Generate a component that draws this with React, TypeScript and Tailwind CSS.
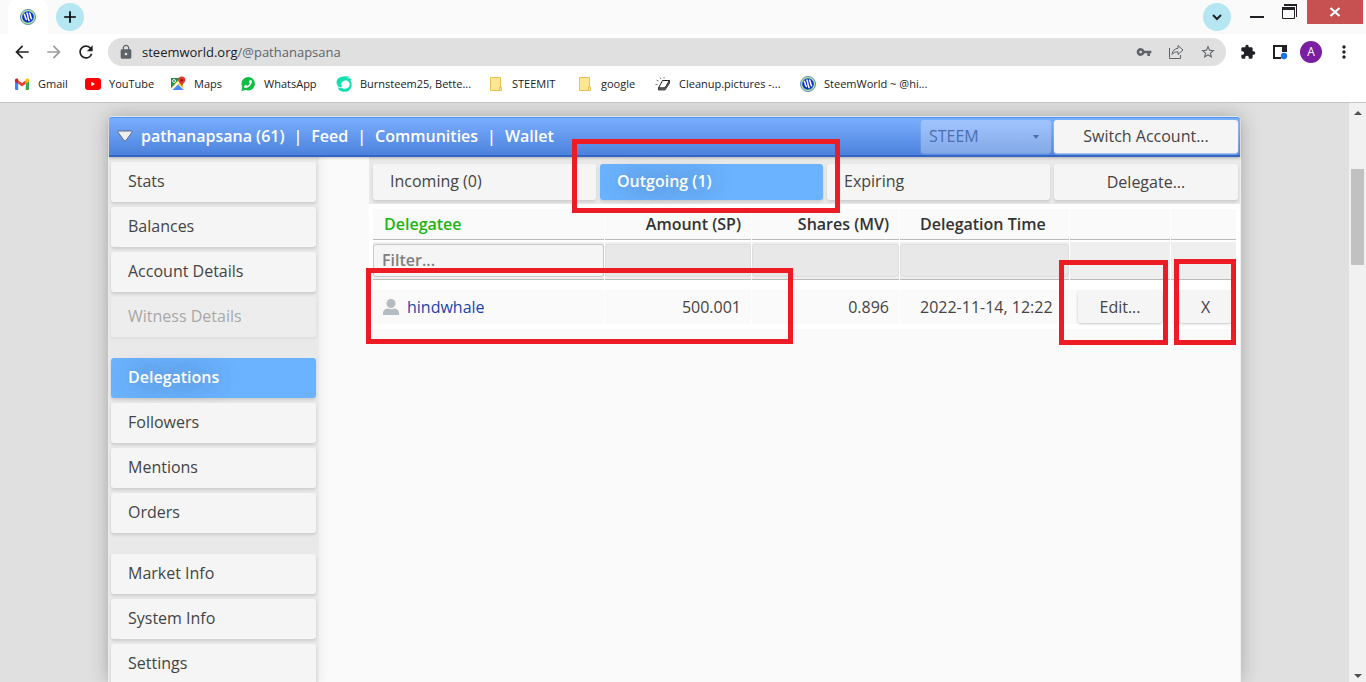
import type { ReactNode } from "react";
import { FaPhoneAlt, FaPlay } from "react-icons/fa";
import {
  MdAdd,
  MdArrowBack,
  MdArrowForward,
  MdExtension,
  MdLock,
  MdMoreVert,
  MdRefresh,
  MdStarBorder,
  MdVpnKey,
} from "react-icons/md";

const menuGroups = [
  [
    { label: "Stats" },
    { label: "Balances" },
    { label: "Account Details" },
    { label: "Witness Details", disabled: true },
  ],
  [
    { label: "Delegations", active: true },
    { label: "Followers" },
    { label: "Mentions" },
    { label: "Orders" },
  ],
  [{ label: "Market Info" }, { label: "System Info" }, { label: "Settings" }],
];

const accountLinks = ["pathanapsana (61)", "Feed", "Communities", "Wallet"];

function SteemWorldIcon() {
  return (
    <svg viewBox="0 0 16 16" className="size-4">
      <circle cx="8" cy="8" r="7.6" fill="#a8e89a" stroke="#5577b8" strokeWidth="0.8" />
      <circle cx="8" cy="8" r="5.8" fill="#1233c4" />
      <path
        d="M4.3 5.4c1.200 1 .2 2.600 2 5M6.900 4c1.400 2 .3 4 2.200 7.600M9.600 4.200c1.300 1.700.4 3.200 2 5.600"
        fill="none"
        stroke="#fff"
        strokeWidth="1.5"
        strokeLinecap="round"
      />
    </svg>
  );
}

function GmailIcon() {
  return (
    <svg viewBox="0 0 16 16" className="size-4">
      <path d="M1 4.2 4.2 6.6V14H2a1 1 0 0 1-1-1z" fill="#4285f4" />
      <path d="M15 4.2 11.8 6.6V14H14a1 1 0 0 0 1-1z" fill="#34a853" />
      <path d="M4.2 4.2 8 7l3.8-2.8v3.6L8 10.6 4.2 7.8z" fill="#ea4335" />
      <path d="M1 5.4V4c0-1.6 1.7-2 2.7-1.2l.5.4v4.6z" fill="#c5221f" />
      <path d="M15 5.4V4c0-1.6-1.7-2-2.7-1.2l-.5.4v4.6z" fill="#fbbc04" />
    </svg>
  );
}

function YouTubeIcon() {
  return (
    <span className="flex h-3 w-4 items-center justify-center rounded-[3px] bg-[#f00] text-white">
      <FaPlay className="size-1" />
    </span>
  );
}

function MapsIcon() {
  return (
    <svg viewBox="0 0 16 16" className="size-4">
      <path d="M1 2h12v12H1z" fill="#fbc816" />
      <path d="M1 2h9L1 12z" fill="#1e8e4e" />
      <path d="M1 14 7.5 8 14 14z" fill="#4a8af4" />
      <path d="m1 13 8-8.5 1.5 1.2L2.5 14H1z" fill="#fff" />
      <path d="m10 9 3.500 3.500V14L8.500 9z" fill="#dfe3e6" />
      <circle cx="4" cy="5" r="1.5" fill="none" stroke="#fff" strokeWidth="0.9" />
      <path d="M11.8.6a3.500 3.500 0 0 0-3.500 3.600c0 2.500 2.800 3 3.500 6.400.7-3.400 3.500-3.900 3.500-6.400A3.500 3.500 0 0 0 11.8.6z" fill="#e2392c" />
      <circle cx="11.8" cy="4.2" r="1.2" fill="#7c1712" />
    </svg>
  );
}

function WhatsAppIcon() {
  return (
    <span className="relative flex size-4 items-center justify-center">
      <svg viewBox="0 0 16 16" className="absolute inset-0 size-4">
        <circle cx="8.200" cy="7.800" r="6.800" fill="#12bd45" />
        <path d="m1.200 15 1.500-5.500 4 4.200z" fill="#12bd45" />
      </svg>
      <FaPhoneAlt className="relative size-2 -scale-x-100 text-white" />
    </span>
  );
}

function SteemitIcon() {
  return (
    <svg viewBox="0 0 16 16" className="size-4">
      <path
        d="M14 .8C10-.3 4 0 1.600 3 0 5.200.200 8.600 2.400 10.600 2 12 2.200 13 3 14c2.800 2.400 8.500 2.500 11-.6 2.200-2.700 2.200-6.200.4-8.400L15.600 3C14.500 2 12 2 10.500 2.300z"
        fill="#0fe0b0"
      />
      <path
        d="M2.400 10.600c2.300 1.400 4 .8 3.400-.8C4.400 6.800 7 4.200 10.200 4.600c3.400.5 4.600 4.200 2.600 6.500-1.800 2-4.800 2.200-6.600.8-1.200.6-2.800.4-3.700-.4z"
        fill="#fff"
      />
    </svg>
  );
}

function FolderIcon() {
  return (
    <svg viewBox="0 0 16 16" className="size-4">
      <path d="M2.500 1.500h10v9.500l1 .5v3h-11z" fill="#ffe694" stroke="#e8c14e" />
      <path d="M11.500 14.500v-3.500h2" fill="none" stroke="#e8c14e" />
    </svg>
  );
}

function EraserIcon() {
  return (
    <svg viewBox="0 0 16 16" className="size-4">
      <path d="M7.500 4.500h7L10 12H3.500z" fill="#fff" stroke="#222" />
      <path d="M10 12l4.500-7.500v2.800L10 14H3.500v-2z" fill="#777" stroke="#222" strokeWidth="0.8" />
      <path d="M5 1.500 6 3M1.500 4l2 1M.5 8.500h2M9 1v1.500" stroke="#777" />
    </svg>
  );
}

function ShareIcon() {
  return (
    <svg viewBox="0 0 16 16" className="size-4">
      <path d="M1.500 4v10.500h11V11" fill="none" stroke="#5f6368" />
      <path d="M4 10.500C4.500 6.500 7 4.500 10 4.300V1.500l5 4.500-5 4.500V7.800C7.500 7.700 5.500 8.500 4 10.500z" fill="none" stroke="#5f6368" strokeLinejoin="round" />
    </svg>
  );
}

function SidePanelIcon() {
  return (
    <svg viewBox="0 0 16 16" className="size-4">
      <path d="M1 1h14v14H1zM3 3v10h7V3z" fill="#202124" fillRule="evenodd" />
      <path d="M9 8h7v8H9z" fill="#fff" />
      <circle cx="12" cy="12" r="3.2" fill="#1a73e8" />
    </svg>
  );
}

const bookmarks: { label: string; icon: ReactNode; width: string }[] = [
  { label: "Gmail", icon: <GmailIcon />, width: "w-[71px]" },
  { label: "YouTube", icon: <YouTubeIcon />, width: "w-[85px]" },
  { label: "Maps", icon: <MapsIcon />, width: "w-[70px]" },
  { label: "WhatsApp", icon: <WhatsAppIcon />, width: "w-24" },
  { label: "Burnsteem25, Bette...", icon: <SteemitIcon />, width: "w-[152px]" },
  { label: "STEEMIT", icon: <FolderIcon />, width: "w-[89px]" },
  { label: "google", icon: <FolderIcon />, width: "w-[78px]" },
  { label: "Cleanup.pictures -...", icon: <EraserIcon />, width: "w-[145px]" },
  { label: "SteemWorld ~ @hi...", icon: <SteemWorldIcon />, width: "w-[150px]" },
];

function TabStrip() {
  return (
    <div className="flex h-[34px] shrink-0 justify-between bg-[#fafafa]">
      <div className="flex items-center gap-2 pl-2">
        <div className="flex h-full w-10 items-center justify-center rounded-t-lg bg-white">
          <SteemWorldIcon />
        </div>
        <button aria-label="New tab" className="flex size-7 items-center justify-center rounded-full bg-[#b5e7f3]">
          <MdAdd className="size-5" />
        </button>
      </div>
      <div className="flex">
        <button aria-label="Search tabs" className="mt-[3px] mr-[19px] flex size-7 items-center justify-center rounded-full bg-[#b5e7f3]">
          <svg viewBox="0 0 12 12" className="size-3">
            <path d="m2 4 4 4 4-4" fill="none" stroke="#202124" strokeWidth="2" />
          </svg>
        </button>
        <button aria-label="Minimize" className="mt-4 h-[2px] w-3.5 bg-[#202124]" />
        <button aria-label="Restore" className="mr-[19px] ml-[18px] flex h-6 w-4 items-center">
          <svg viewBox="0 0 16 16" className="size-4">
            <path d="M3 1.500h11.500V13" fill="none" stroke="#202124" />
            <path d="M2 0h13v2H2zM0 3h13v3H0z" fill="#202124" />
            <path d="M.5 4v10.500h12V4" fill="none" stroke="#202124" />
          </svg>
        </button>
        <button aria-label="Close" className="-ml-2.5 mr-[3px] flex h-6 w-14 items-center justify-center bg-[#c75050]">
          <svg viewBox="0 0 12 12" className="size-3">
            <path d="m1.500 2 9 8m0-8-9 8" stroke="#fff" strokeWidth="2.2" />
          </svg>
        </button>
      </div>
    </div>
  );
}

function Toolbar() {
  return (
    <div className="flex h-9 shrink-0 items-center bg-white px-3 text-[#202124]">
      <button aria-label="Back" className="w-8"><MdArrowBack className="size-5" /></button>
      <button aria-label="Forward" className="w-8 text-[#9c9c9c]"><MdArrowForward className="size-5" /></button>
      <button aria-label="Reload" className="w-8"><MdRefresh className="size-5" /></button>
      <div className="flex h-7 flex-1 items-center rounded-full bg-[#e0e0e0] px-2.5 text-[#5f6368]">
        <MdLock className="mr-2 size-4" />
        <span className="flex-1 text-[13px] leading-5">
          <span className="text-[#202124]">steemworld.org</span>/@pathanapsana
        </span>
        <span className="flex items-center gap-4">
          <MdVpnKey className="size-4" />
          <ShareIcon />
          <MdStarBorder className="size-4" />
        </span>
      </div>
      <div className="flex items-center gap-4 pl-3.5">
        <MdExtension className="size-4" />
        <SidePanelIcon />
        <span className="-mx-1 flex size-[22px] items-center justify-center rounded-full bg-[#7b1fa2] text-xs text-white">A</span>
        <MdMoreVert className="size-5" />
      </div>
    </div>
  );
}

function Bookmarks() {
  return (
    <nav className="flex h-[33px] shrink-0 border-b border-[#c4c4c4] bg-white pb-1 pl-3.5 text-[11px] text-[#202124]">
      {bookmarks.map((b) => (
        <a key={b.label} href="#" className={`flex items-center gap-2 whitespace-nowrap ${b.width}`}>
          <span className="shrink-0">{b.icon}</span>
          {b.label}
        </a>
      ))}
    </nav>
  );
}

function AccountBar() {
  return (
    <header className="relative z-10 flex h-10 items-center rounded-t-[3px] border-t border-b-2 border-t-[#4c94f0] border-b-[#3465c4] bg-linear-to-b from-[#7aaeff] to-[#4c82dc] pr-0.5 pb-px pl-2 font-semibold text-white shadow-[0_1px_3px_rgba(0,0,0,0.25)]">
      <svg viewBox="0 0 16 12" className="mr-2 h-3 w-4">
        <path d="M1.500 1h13q1 .2.500 1.200L9 10.500q-1 1-2 0L1 2.200Q.5 1.200 1.500 1z" fill="#eee" stroke="#5a6a8c" />
      </svg>
      <nav className="flex flex-1">
        {accountLinks.map((link, i) => (
          <span key={link}>
            {i > 0 && <span className="px-[9px]">|</span>}
            <a href="#">{link}</a>
          </span>
        ))}
      </nav>
      <label className="relative mr-[3px] flex font-normal">
        <select disabled aria-label="Chain" className="h-[33px] w-[130px] appearance-none rounded-[3px] bg-white/30 px-2 text-[#4a6fae] shadow-[0_1px_2px_rgba(255,255,255,0.3)]">
          <option>STEEM</option>
        </select>
        <svg viewBox="0 0 6 4" className="absolute top-[15px] right-3 h-1 w-1.5">
          <path d="M0 0h6L3 4z" fill="#4a6fae" />
        </svg>
      </label>
      <button className="h-[33px] w-[184px] rounded-[3px] bg-[#f5f5f5] font-normal text-[#444] shadow-[0_1px_2px_rgba(255,255,255,0.7)]">
        Switch Account...
      </button>
    </header>
  );
}

function Sidebar() {
  return (
    <aside className="flex w-[210px] shrink-0 flex-col gap-[21px] bg-[#e9e9e9] py-[5px] pr-[3px] pl-0.5 shadow-[2px_0_10px_rgba(0,0,0,0.06)]">
      {menuGroups.map((group) => (
        <div key={group[0].label} className="flex flex-col gap-[5px]">
          {group.map((item) => (
            <button
              key={item.label}
              disabled={item.disabled}
              className={`h-10 shrink-0 rounded-[3px] px-[17px] pb-0.5 text-left shadow-[0_2px_3px_rgba(0,0,0,0.12)] ${
                item.active
                  ? "bg-[#6bb3ff] font-semibold text-white text-shadow-[0_0_20px_rgba(80,80,80,0.5)]"
                  : "bg-[#f5f5f5] text-[#444] disabled:opacity-40"
              }`}
            >
              {item.label}
            </button>
          ))}
        </div>
      ))}
    </aside>
  );
}

function Highlight({ className }: { className: string }) {
  return <span className={`pointer-events-none absolute z-20 border-[5px] border-[#ed1c24] ${className}`} />;
}

function DelegationTabs() {
  const tab = "h-9 w-full rounded-[3px] px-[17px] pb-0.5 text-left shadow-[0_2px_3px_rgba(0,0,0,0.12)]";
  return (
    <div className="flex gap-1 bg-[#e9e9e9] pt-[7px] pr-0.5 pb-1 pl-1">
      <div className="flex-1">
        <button className={`${tab} bg-[#f5f5f5]`}>Incoming (0)</button>
      </div>
      <div className="relative flex-1">
        <button className={`${tab} bg-[#6bb3ff] font-semibold text-white text-shadow-[0_0_20px_rgba(80,80,80,0.5)]`}>Outgoing (1)</button>
        <Highlight className="-top-[25px] -right-[17px] -bottom-[13px] -left-7" />
      </div>
      <div className="flex-1">
        <button className={`${tab} bg-[#f5f5f5]`}>Expiring</button>
      </div>
      <button className="h-9 w-[184px] rounded-[3px] bg-[#f5f5f5] shadow-[0_2px_3px_rgba(0,0,0,0.12)]">Delegate...</button>
    </div>
  );
}

function DelegationTable() {
  const filterCell = "border-t-2 border-b border-t-white border-b-[#bbb] bg-[#efefef] bg-clip-padding";
  const dataCell = "border-t-[10px] border-white bg-[#fafafa] bg-clip-padding";
  const rowButton = "h-8 rounded-[3px] bg-[#f5f5f5] shadow-[0_1px_3px_rgba(0,0,0,0.2)]";
  return (
    <div className="bg-white px-[3px] py-[5px]">
      <table className="w-full table-fixed border-separate border-spacing-x-px border-spacing-y-0">
        <colgroup>
          <col />
          <col className="w-[146px]" />
          <col className="w-[147px]" />
          <col className="w-[169px]" />
          <col className="w-[100px]" />
          <col className="w-[65px]" />
        </colgroup>
        <thead>
          <tr className="h-[31px] text-left text-[#333] *:border-b *:border-[#bbb] *:bg-[#fafafa] *:font-semibold">
            <th className="pl-[11px] text-[#1db510]">Delegatee</th>
            <th className="pr-2.5 text-right">Amount (SP)</th>
            <th className="pr-2.5 text-right">Shares (MV)</th>
            <th className="pl-5">Delegation Time</th>
            <th />
            <th />
          </tr>
        </thead>
        <tbody>
          <tr className="h-10">
            <td className={filterCell}>
              <input
                aria-label="Filter by delegatee"
                placeholder="Filter..."
                className="block h-[33px] w-full rounded-[3px] border border-[#c8c8c8] bg-[#f5f5f5] px-2 pb-0.5 font-semibold placeholder:text-[#808080]"
              />
            </td>
            {["amount", "shares", "time"].map((name) => (
              <td key={name} className={filterCell}>
                <input disabled aria-label={`Filter by ${name}`} className="block h-[33px] w-full rounded-[3px] border border-[#dedede] bg-[#e8e8e8]" />
              </td>
            ))}
            <td className={filterCell} />
            <td className={filterCell} />
          </tr>
          <tr className="relative h-11">
            <td className={`${dataCell} pl-2.5`}>
              <a href="#" className="flex items-center gap-2 text-[#1a44a8]">
                <svg viewBox="0 0 16 16" className="size-4">
                  <circle cx="8" cy="4.500" r="4.500" fill="#b4bcc2" />
                  <path d="M0 16v-2.500Q.5 9.800 5 9.500q3 1.500 6 0 4.500.3 5 4V16z" fill="#b4bcc2" />
                </svg>
                hindwhale
              </a>
              <Highlight className="-top-3 -left-[7px] h-[76px] w-[427px]" />
            </td>
            <td className={`${dataCell} pr-2.5 text-right`}>500.001</td>
            <td className={`${dataCell} pr-2.5 text-right`}>0.896</td>
            <td className={`${dataCell} pl-5 whitespace-nowrap`}>2022-11-14, 12:22</td>
            <td className={`${dataCell} relative px-2`}>
              <button className={`${rowButton} w-full`}>Edit...</button>
              <Highlight className="-top-[30px] right-[2px] -bottom-[21px] -left-[11px]" />
            </td>
            <td className={`${dataCell} relative pr-[5px] pl-[9px]`}>
              <button aria-label="Remove delegation" className={`${rowButton} w-full`}>X</button>
              <Highlight className="-top-[31px] right-0 -bottom-[21px] left-[3px]" />
            </td>
          </tr>
        </tbody>
      </table>
    </div>
  );
}

function Scrollbar() {
  return (
    <div className="flex w-[17px] shrink-0 flex-col items-center justify-between bg-[#f1f1f1] py-1">
      <svg viewBox="0 0 8 4" className="mt-1 h-1 w-2"><path d="M0 4h8L4 0z" fill="#505050" /></svg>
      <div className="mt-[54px] mb-auto h-24 w-[13px] bg-[#c1c1c1]" />
      <svg viewBox="0 0 8 4" className="h-1 w-2"><path d="M0 0h8L4 4z" fill="#505050" /></svg>
    </div>
  );
}

export default function App() {
  return (
    <div className="flex h-screen flex-col overflow-hidden font-['Open_Sans','Noto_Sans',sans-serif]">
      <TabStrip />
      <Toolbar />
      <Bookmarks />
      <div className="flex min-h-0 flex-1">
        <div className="flex min-w-0 flex-1 justify-center overflow-hidden bg-[#e0e0e0] pt-[13px]">
          <main className="flex w-full max-w-[1133px] flex-col rounded-t-[5px] border border-b-0 border-[#f0f0f0] bg-[#fafafa] text-base text-[#444] shadow-[0_0_20px_rgba(0,0,0,0.25)]">
            <AccountBar />
            <div className="flex min-h-0 flex-1">
              <Sidebar />
              <section className="ml-[50px] min-w-0 flex-1">
                <DelegationTabs />
                <DelegationTable />
              </section>
            </div>
          </main>
        </div>
        <Scrollbar />
      </div>
    </div>
  );
}
